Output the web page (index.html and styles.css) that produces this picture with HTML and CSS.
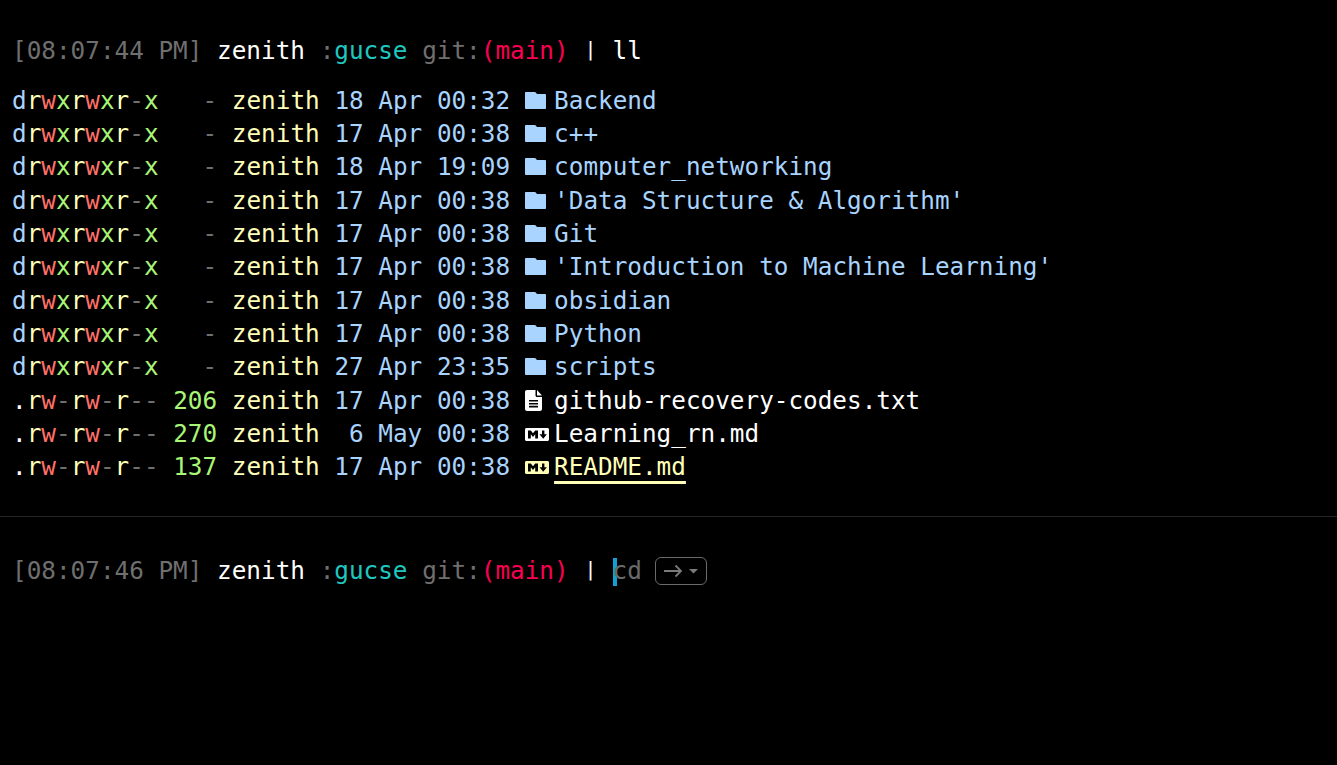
FILE: index.html
```html
<!DOCTYPE html>
<html lang="en">
<head>
<meta charset="utf-8">
<title>Terminal</title>
<link rel="stylesheet" href="styles.css">
</head>
<body>
<svg class="defs" width="0" height="0" aria-hidden="true">
  <symbol id="folder" viewBox="0 0 21 17"><path d="M.8 0h9.400l1.800 2h8.200c.4 0 .8.400.8.800v13.400c0 .4-.4.800-.8.800H.8c-.4 0-.8-.4-.8-.8V.8C0 .4.400 0 .8 0z" fill="currentColor"/></symbol>
  <symbol id="file" viewBox="0 0 17 21"><path fill-rule="evenodd" d="M2 0h8.500v5.500c0 .8.700 1.500 1.500 1.500h5v12c0 1.100-.9 2-2 2H2c-1.100 0-2-.9-2-2V2C0 .9.900 0 2 0zM12 0l5 5.500h-5zM4 10v1.600h9V10zm0 2.900v1.600h9v-1.600zm0 2.900v1.600h9v-1.600z" fill="currentColor"/></symbol>
  <symbol id="md" viewBox="0 0 24 13"><path fill-rule="evenodd" d="M1.500 0h21c.8 0 1.500.7 1.500 1.500v10c0 .8-.7 1.500-1.500 1.500h-21c-.8 0-1.500-.7-1.500-1.500v-10C0 .7.700 0 1.500 0zM3 2.500v8h2.800V6.200L8 9l2.200-2.800v4.300H13v-8h-2.800L8 5.300 5.800 2.500zM17 2.500v3.800h-2.500l3.700 4.400 3.700-4.400h-2.500V2.500z" fill="currentColor"/></symbol>
</svg>
<main class="term">
  <div class="line prompt"><span class="dim">[08:07:44 PM]</span> <span class="white">zenith</span> <span class="dim">:</span><span class="teal">gucse</span> <span class="dim">git:</span><span class="pink">(main)</span> <span class="pipe">|</span> <span class="white">ll</span></div>
  <div class="listing">
    <div class="line"><span class="b">d</span><span class="y">r</span><span class="r">w</span><span class="g">x</span><span class="y">r</span><span class="r">w</span><span class="g">x</span><span class="y">r</span><span class="dim">-</span><span class="g">x</span>   <span class="dim">-</span> <span class="y">zenith</span> <span class="b">18 Apr 00:32</span> <svg class="ico ico-folder b"><use href="#folder"/></svg><span class="b">Backend</span></div>
    <div class="line"><span class="b">d</span><span class="y">r</span><span class="r">w</span><span class="g">x</span><span class="y">r</span><span class="r">w</span><span class="g">x</span><span class="y">r</span><span class="dim">-</span><span class="g">x</span>   <span class="dim">-</span> <span class="y">zenith</span> <span class="b">17 Apr 00:38</span> <svg class="ico ico-folder b"><use href="#folder"/></svg><span class="b">c++</span></div>
    <div class="line"><span class="b">d</span><span class="y">r</span><span class="r">w</span><span class="g">x</span><span class="y">r</span><span class="r">w</span><span class="g">x</span><span class="y">r</span><span class="dim">-</span><span class="g">x</span>   <span class="dim">-</span> <span class="y">zenith</span> <span class="b">18 Apr 19:09</span> <svg class="ico ico-folder b"><use href="#folder"/></svg><span class="b">computer_networking</span></div>
    <div class="line"><span class="b">d</span><span class="y">r</span><span class="r">w</span><span class="g">x</span><span class="y">r</span><span class="r">w</span><span class="g">x</span><span class="y">r</span><span class="dim">-</span><span class="g">x</span>   <span class="dim">-</span> <span class="y">zenith</span> <span class="b">17 Apr 00:38</span> <svg class="ico ico-folder b"><use href="#folder"/></svg><span class="b">'Data Structure &amp; Algorithm'</span></div>
    <div class="line"><span class="b">d</span><span class="y">r</span><span class="r">w</span><span class="g">x</span><span class="y">r</span><span class="r">w</span><span class="g">x</span><span class="y">r</span><span class="dim">-</span><span class="g">x</span>   <span class="dim">-</span> <span class="y">zenith</span> <span class="b">17 Apr 00:38</span> <svg class="ico ico-folder b"><use href="#folder"/></svg><span class="b">Git</span></div>
    <div class="line"><span class="b">d</span><span class="y">r</span><span class="r">w</span><span class="g">x</span><span class="y">r</span><span class="r">w</span><span class="g">x</span><span class="y">r</span><span class="dim">-</span><span class="g">x</span>   <span class="dim">-</span> <span class="y">zenith</span> <span class="b">17 Apr 00:38</span> <svg class="ico ico-folder b"><use href="#folder"/></svg><span class="b">'Introduction to Machine Learning'</span></div>
    <div class="line"><span class="b">d</span><span class="y">r</span><span class="r">w</span><span class="g">x</span><span class="y">r</span><span class="r">w</span><span class="g">x</span><span class="y">r</span><span class="dim">-</span><span class="g">x</span>   <span class="dim">-</span> <span class="y">zenith</span> <span class="b">17 Apr 00:38</span> <svg class="ico ico-folder b"><use href="#folder"/></svg><span class="b">obsidian</span></div>
    <div class="line"><span class="b">d</span><span class="y">r</span><span class="r">w</span><span class="g">x</span><span class="y">r</span><span class="r">w</span><span class="g">x</span><span class="y">r</span><span class="dim">-</span><span class="g">x</span>   <span class="dim">-</span> <span class="y">zenith</span> <span class="b">17 Apr 00:38</span> <svg class="ico ico-folder b"><use href="#folder"/></svg><span class="b">Python</span></div>
    <div class="line"><span class="b">d</span><span class="y">r</span><span class="r">w</span><span class="g">x</span><span class="y">r</span><span class="r">w</span><span class="g">x</span><span class="y">r</span><span class="dim">-</span><span class="g">x</span>   <span class="dim">-</span> <span class="y">zenith</span> <span class="b">27 Apr 23:35</span> <svg class="ico ico-folder b"><use href="#folder"/></svg><span class="b">scripts</span></div>
    <div class="line"><span class="white">.</span><span class="y">r</span><span class="r">w</span><span class="dim">-</span><span class="y">r</span><span class="r">w</span><span class="dim">-</span><span class="y">r</span><span class="dim">--</span> <span class="g">206</span> <span class="y">zenith</span> <span class="b">17 Apr 00:38</span> <svg class="ico ico-file white"><use href="#file"/></svg><span class="white">github-recovery-codes.txt</span></div>
    <div class="line"><span class="white">.</span><span class="y">r</span><span class="r">w</span><span class="dim">-</span><span class="y">r</span><span class="r">w</span><span class="dim">-</span><span class="y">r</span><span class="dim">--</span> <span class="g">270</span> <span class="y">zenith</span> <span class="b"> 6 May 00:38</span> <svg class="ico ico-md white"><use href="#md"/></svg><span class="white">Learning_rn.md</span></div>
    <div class="line"><span class="white">.</span><span class="y">r</span><span class="r">w</span><span class="dim">-</span><span class="y">r</span><span class="r">w</span><span class="dim">-</span><span class="y">r</span><span class="dim">--</span> <span class="g">137</span> <span class="y">zenith</span> <span class="b">17 Apr 00:38</span> <svg class="ico ico-md y"><use href="#md"/></svg><span class="y under">README.md</span></div>
  </div>
  <hr class="rule">
  <div class="line prompt"><span class="dim">[08:07:46 PM]</span> <span class="white">zenith</span> <span class="dim">:</span><span class="teal">gucse</span> <span class="dim">git:</span><span class="pink">(main)</span> <span class="pipe">|</span> <span class="cursor"></span><span class="ghost">cd</span> <span class="hint"><svg class="hint-ico" viewBox="0 0 36 14"><path d="M1 7h17M12.500 1.500L18 7l-5.500 5.500" fill="none" stroke="currentColor" stroke-width="1.800"/><path d="M26 5h9l-4.500 4.500z" fill="currentColor"/></svg></span></div>
</main>
</body>
</html>
```
FILE: styles.css
```css
html, body { margin: 0; height: 100%; background: #000; }
.defs { position: absolute; }
.term {
  font-family: "DejaVu Sans Mono", monospace;
  font-size: 24.33px;
  color: #fff;
  padding-top: 33.6px;
  height: 765px;
  box-sizing: border-box;
  overflow: hidden;
}
.line {
  white-space: pre;
  line-height: 33.33px;
  height: 33.33px;
  padding-left: 12px;
}
.listing { margin-top: 16.7px; }
.rule {
  border: 0;
  border-top: 1px solid #242424;
  margin: 32.5px 0 36.6px;
}
.dim { color: #6f6f6f; }
.white { color: #fff; }
.teal { color: #1ec8c0; }
.pink { color: #fa0050; }
.b { color: #a8d4ff; }
.y { color: #ffffb8; }
.r { color: #ff7168; }
.g { color: #a9f576; }
.pipe {
  color: #fff;
  font-size: 20px;
  display: inline-block;
  width: 14.65px;
  text-align: center;
  vertical-align: 3px;
  line-height: 20px;
}
.ico { display: inline-block; }
.ico-folder { width: 21px; height: 17px; margin-right: 8.300px; vertical-align: 0; }
.ico-file { width: 17px; height: 21px; margin-right: 12.300px; vertical-align: -2px; }
.ico-md { width: 24px; height: 13px; margin-right: 5.300px; vertical-align: 1px; }
.under {
  text-decoration: underline;
  text-decoration-thickness: 3px;
  text-underline-offset: 6px;
}
.cursor {
  display: inline-block;
  width: 4px;
  height: 28px;
  background: #12a0d6;
  vertical-align: -7px;
  margin-right: -4px;
}
.ghost { color: #6a6a6a; }
.hint {
  display: inline-block;
  box-sizing: border-box;
  width: 52px;
  height: 28px;
  margin-left: -2px;
  border: 1px solid #6a6a6a;
  border-radius: 6px;
  color: #7a7a7a;
  vertical-align: 1px;
  line-height: 0;
}
.hint-ico { width: 36px; height: 14px; margin: 6px 0 0 7px; }
```
